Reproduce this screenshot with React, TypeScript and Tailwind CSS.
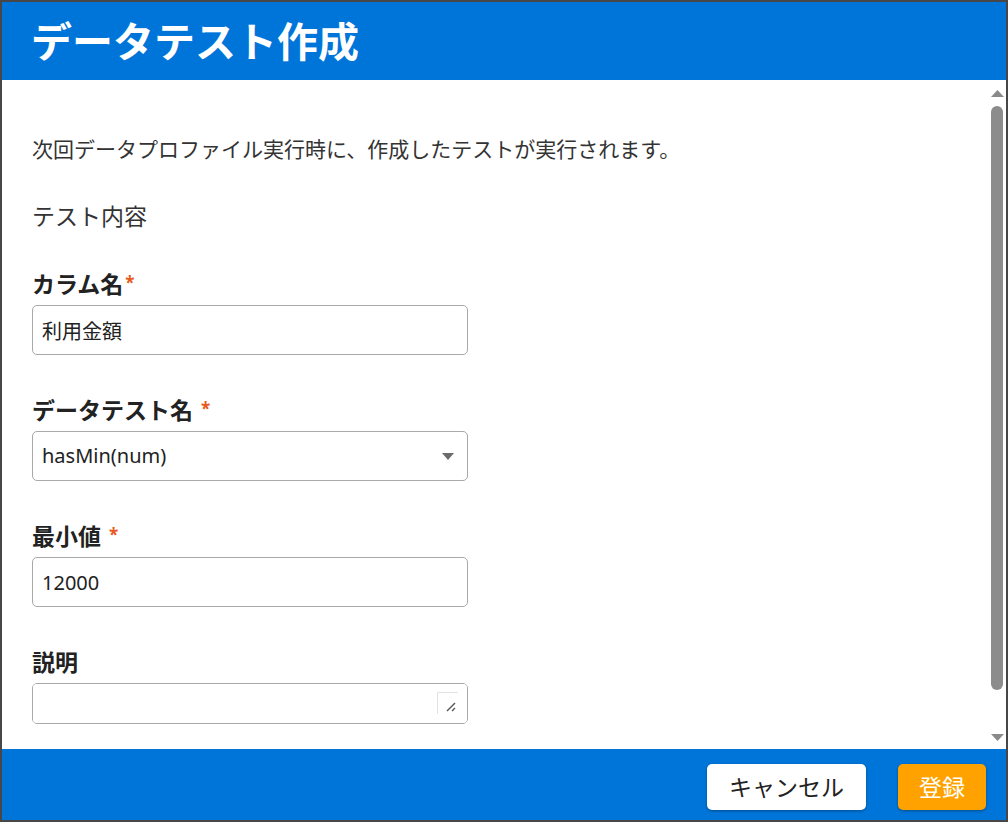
import React, { useState } from 'react';

type FieldProps = {
    label: string;
    required?: boolean;
    tight?: boolean;
    first?: boolean;
    children: React.ReactNode;
};

const Field: React.FC<FieldProps> = ({ label, required, tight, first, children }) => (
    <div className={first ? 'mt-[44px]' : 'mt-[43px]'}>
        <div className="h-[24px] flex items-center text-[23px] font-bold text-[#222] leading-none mb-[9px]">
            <span>{label}</span>
            {required && (
                <span className={`text-[#e85a1c] text-[17px] ${tight ? 'ml-[2px]' : 'ml-[8px]'} -mt-[4px]`}>*</span>
            )}
        </div>
        {children}
    </div>
);

const boxClass =
    'w-[436px] rounded-[5px] border border-[#a9a9a9] bg-white px-[9px] text-[20px] text-[#222] outline-none';

const App: React.FC = () => {
    const [column, setColumn] = useState('利用金額');
    const [testName, setTestName] = useState('hasMin(num)');
    const [minValue, setMinValue] = useState('12000');
    const [note, setNote] = useState('');

    return (
        <div className="w-[1008px] h-[822px] border-2 border-[#474747] bg-white flex flex-col font-['Noto_Sans','Noto_Sans_CJK_JP',sans-serif]">
            <header className="h-[78px] bg-[#0075d9] flex items-center px-[29px]">
                <h1 className="text-[41px] font-bold text-white leading-none">データテスト作成</h1>
            </header>

            <div className="flex-1 flex min-h-0">
                <main className="flex-1 pl-[30px] pt-[57px]">
                    <p className="text-[21px] leading-[24px] text-[#333]">
                        次回データプロファイル実行時に、作成したテストが実行されます。
                    </p>
                    <p className="mt-[43px] text-[23px] leading-[24px] text-[#333]">テスト内容</p>

                    <Field label="カラム名" required tight first>
                        <input className={`${boxClass} h-[50px]`} value={column} onChange={e => setColumn(e.target.value)} />
                    </Field>

                    <Field label="データテスト名" required>
                        <div className="relative w-[436px]">
                            <select
                                className={`${boxClass} h-[50px] appearance-none`}
                                value={testName}
                                onChange={e => setTestName(e.target.value)}
                            >
                                <option>hasMin(num)</option>
                                <option>hasMax(num)</option>
                                <option>isNotNull</option>
                            </select>
                            <svg className="absolute right-[14px] top-[22px] pointer-events-none" width="12" height="7" viewBox="0 0 12 7">
                                <path d="M0 0h12L6 7z" fill="#6b6b6b" />
                            </svg>
                        </div>
                    </Field>

                    <Field label="最小値" required>
                        <input className={`${boxClass} h-[50px]`} value={minValue} onChange={e => setMinValue(e.target.value)} />
                    </Field>

                    <Field label="説明">
                        <div className="relative w-[436px]">
                            <textarea
                                className={`${boxClass} h-[41px] resize-none block py-[6px]`}
                                value={note}
                                onChange={e => setNote(e.target.value)}
                            />
                            {/* resize grip */}
                            <svg className="absolute right-[10px] top-[9px] pointer-events-none" width="21" height="22" viewBox="0 0 21 22">
                                <path d="M0.5 22V0.5H21" fill="none" stroke="#e2e2e2" />
                                <path d="M10 19l8-8M15 19l3-3" stroke="#555" strokeWidth="1.4" />
                            </svg>
                        </div>
                    </Field>
                </main>

                {/* scrollbar */}
                <div className="w-[18px] flex flex-col items-center pt-[10px] pb-[8px]">
                    <svg width="13" height="7" viewBox="0 0 13 7">
                        <path d="M6.5 0L13 7H0z" fill="#8a8a8a" />
                    </svg>
                    <div className="mt-[9px] w-[12px] h-[584px] rounded-full bg-[#8c8c8c]" />
                    <div className="flex-1" />
                    <svg width="13" height="7" viewBox="0 0 13 7">
                        <path d="M0 0h13L6.5 7z" fill="#8a8a8a" />
                    </svg>
                </div>
            </div>

            <footer className="h-[71px] bg-[#0075d9] flex items-start justify-end gap-[32px] pt-[15px] pr-[20px]">
                <button className="w-[159px] h-[46px] rounded-[5px] bg-white text-[23px] text-[#222] shadow-[0_1px_3px_rgba(0,0,0,0.35)]">
                    キャンセル
                </button>
                <button className="w-[88px] h-[46px] rounded-[5px] bg-[#ffa200] text-[23px] text-white shadow-[0_1px_3px_rgba(0,0,0,0.35)]">
                    登録
                </button>
            </footer>
        </div>
    );
};

export default App;
